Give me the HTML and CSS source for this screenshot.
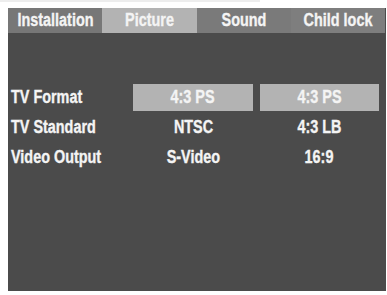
FILE: index.html
```html
<!DOCTYPE html>
<html>
<head>
<meta charset="utf-8">
<link rel="stylesheet" href="styles.css">
</head>
<body>
<div class="topline"></div>
<div class="panel">
  <div class="tabs">
    <div class="tab tab-install"><span class="t">Installation</span></div>
    <div class="tab tab-picture"><span class="t">Picture</span></div>
    <div class="tab tab-sound"><span class="t">Sound</span></div>
    <div class="tab tab-child"><span class="t">Child lock</span></div>
  </div>
  <div class="menu">
    <div class="label"><span class="t tl">TV Format</span></div>
    <div class="value sel"><span class="t">4:3 PS</span></div>
    <div class="value sel"><span class="t">4:3 PS</span></div>
    <div class="label"><span class="t tl">TV Standard</span></div>
    <div class="value"><span class="t">NTSC</span></div>
    <div class="value"><span class="t">4:3 LB</span></div>
    <div class="label"><span class="t tl">Video Output</span></div>
    <div class="value"><span class="t">S-Video</span></div>
    <div class="value"><span class="t">16:9</span></div>
  </div>
</div>
</body>
</html>
```
FILE: styles.css
```css
html, body {
  margin: 0;
  padding: 0;
  background: #ffffff;
}
body {
  position: relative;
  width: 387px;
  height: 295px;
  overflow: hidden;
  font-family: "Liberation Sans", Arial, sans-serif;
  font-weight: bold;
  color: #f4f4f4;
}
.topline {
  position: absolute;
  left: 0;
  top: 0;
  width: 260px;
  height: 2px;
  background: #ededed;
}
.panel {
  margin: 8px 0 0 8px;
  width: 378px;
  height: 283px;
  background: #4b4b4b;
}
.tabs {
  display: grid;
  grid-template-columns: 94px 95px 94px 94px;
  height: 25px;
  width: 377px;
}
.tab {
  display: flex;
  align-items: center;
  justify-content: center;
  font-size: 18px;
  line-height: 25px;
  min-width: 0;
  white-space: nowrap;
}
.t {
  display: inline-block;
  transform: scaleX(0.8);
  white-space: nowrap;
  -webkit-text-stroke: 0.35px #f4f4f4;
}
.tl {
  transform-origin: left center;
}
.tab-install { background: #777777; }
.tab-picture { background: #b3b3b3; }
.tab-sound { background: #7a7a7a; }
.tab-child { background: #7e7e7e; }
.menu {
  display: grid;
  grid-template-columns: 118px 120px 119px;
  column-gap: 7px;
  row-gap: 3px;
  grid-auto-rows: 27px;
  margin-top: 51px;
  font-size: 18px;
}
.label {
  padding-left: 3px;
  display: flex;
  align-items: center;
  min-width: 0;
  white-space: nowrap;
}
.value {
  display: flex;
  align-items: center;
  justify-content: center;
  min-width: 0;
  white-space: nowrap;
}
.value.sel {
  background: #b3b3b3;
}
```
